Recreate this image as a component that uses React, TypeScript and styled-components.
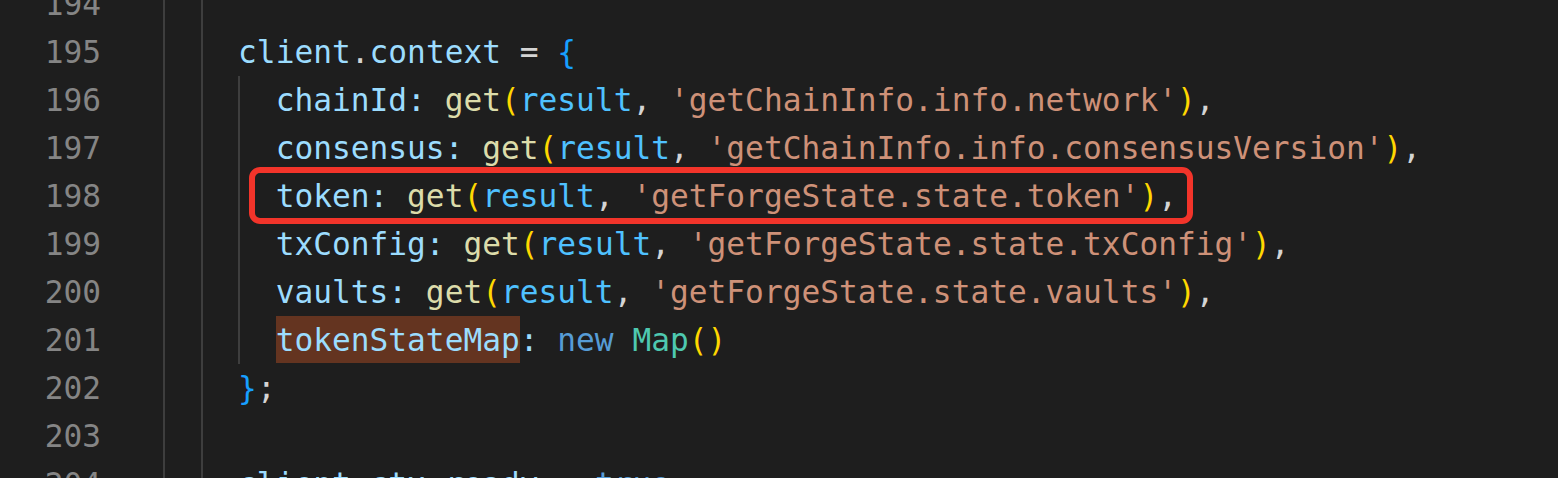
import React from "react";
import styled, { createGlobalStyle } from "styled-components";

const Global = createGlobalStyle`
  html, body { margin: 0; padding: 0; background: #1e1e1e; overflow: hidden; }
  body { width: 1558px; height: 478px; }
`;

type Kind = "var" | "punc" | "fn" | "const" | "str" | "br1" | "br3" | "kw" | "type";

const colors: Record<Kind, string> = {
  var: "#9cdcfe",
  punc: "#d4d4d4",
  fn: "#dcdcaa",
  const: "#4fc1ff",
  str: "#ce9178",
  br1: "#ffd700",
  br3: "#179fff",
  kw: "#569cd6",
  type: "#4ec9b0",
};

type Tok = [string, Kind, boolean?];

interface LineData {
  n: number;
  guides: number;
  toks: Tok[];
  boxed?: boolean;
}

const getLine = (key: string, path: string): Tok[] => [
  [key + ":", "var"],
  [" ", "punc"],
  ["get", "fn"],
  ["(", "br1"],
  ["result", "const"],
  [", ", "punc"],
  [`'${path}'`, "str"],
  [")", "br1"],
  [",", "punc"],
];

const lines: LineData[] = [
  { n: 194, guides: 2, toks: [] },
  {
    n: 195,
    guides: 2,
    toks: [
      ["client", "var"],
      [".", "punc"],
      ["context", "var"],
      [" = ", "punc"],
      ["{", "br3"],
    ],
  },
  { n: 196, guides: 3, toks: getLine("chainId", "getChainInfo.info.network") },
  { n: 197, guides: 3, toks: getLine("consensus", "getChainInfo.info.consensusVersion") },
  { n: 198, guides: 3, toks: getLine("token", "getForgeState.state.token"), boxed: true },
  { n: 199, guides: 3, toks: getLine("txConfig", "getForgeState.state.txConfig") },
  { n: 200, guides: 3, toks: getLine("vaults", "getForgeState.state.vaults") },
  {
    n: 201,
    guides: 3,
    toks: [
      ["tokenStateMap", "var", true],
      [":", "var"],
      [" ", "punc"],
      ["new", "kw"],
      [" ", "punc"],
      ["Map", "type"],
      ["(", "br1"],
      [")", "br1"],
    ],
  },
  {
    n: 202,
    guides: 2,
    toks: [
      ["}", "br3"],
      [";", "punc"],
    ],
  },
  { n: 203, guides: 2, toks: [] },
  {
    n: 204,
    guides: 2,
    toks: [
      ["client", "var"],
      [".", "punc"],
      ["ctx", "var"],
      [".", "punc"],
      ["ready", "var"],
      [" = ", "punc"],
      ["true", "kw"],
      [";", "punc"],
    ],
  },
];

const Editor = styled.div`
  margin-top: -20px;
  font-family: "DejaVu Sans Mono", "Liberation Mono", monospace;
  font-size: 31.2px;
  line-height: 48px;
  display: flex;
  flex-direction: column;
`;

const Row = styled.div`
  display: flex;
  height: 48px;
  white-space: pre;
`;

const LineNo = styled.div`
  width: 101px;
  flex: none;
  text-align: right;
  color: #858585;
  margin-right: 62px;
`;

const Content = styled.div`
  display: flex;
  align-items: stretch;
  flex: 1;
`;

const Guide = styled.span`
  display: inline-block;
  width: 2ch;
  height: 48px;
  box-sizing: border-box;
  border-left: 2px solid #3e3e3e;
`;

const Code = styled.span`
  display: inline-block;
  height: 48px;
`;

const Boxed = styled.span`
  display: inline-block;
  position: relative;
  height: 48px;
  &::after {
    content: "";
    position: absolute;
    left: -27px;
    right: -16px;
    top: -5px;
    bottom: -4px;
    border: 6px solid #f2342a;
    border-radius: 11px;
    pointer-events: none;
  }
`;

const Tk = styled.span<{ $c: string; $hl?: boolean }>`
  color: ${(p) => p.$c};
  ${(p) =>
    p.$hl
      ? `display: inline-block; height: 47px; background: #643420;`
      : ""}
`;

export default function App() {
  return (
    <>
      <Global />
      <Editor>
        {lines.map((l) => {
          const toks = l.toks.map(([t, k, hl], i) => (
            <Tk key={i} $c={colors[k]} $hl={!!hl}>
              {t}
            </Tk>
          ));
          return (
            <Row key={l.n}>
              <LineNo>{l.n}</LineNo>
              <Content>
                {Array.from({ length: l.guides }).map((_, i) => (
                  <Guide key={i} />
                ))}
                {l.boxed ? <Boxed>{toks}</Boxed> : <Code>{toks}</Code>}
              </Content>
            </Row>
          );
        })}
      </Editor>
    </>
  );
}
